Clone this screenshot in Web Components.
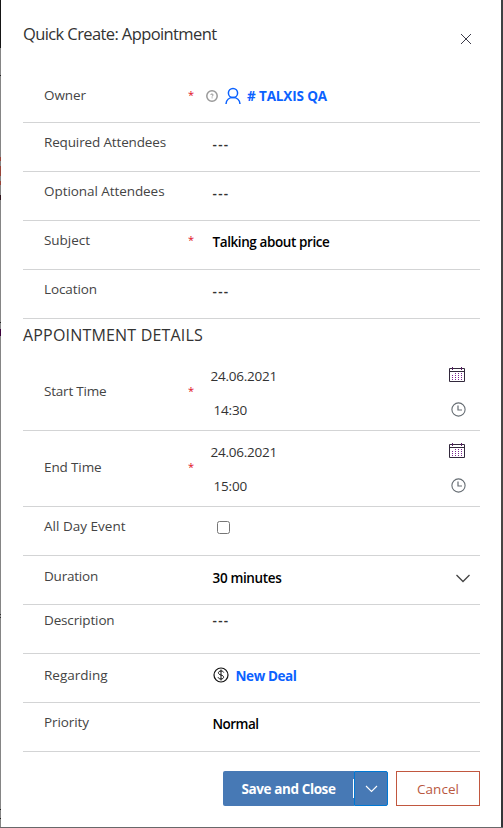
<!DOCTYPE html>
<html lang="en"><head><meta charset="utf-8"><title>Quick Create: Appointment</title>
<style>
html,body{margin:0;height:828px;overflow:hidden;background:#fff}
body{font-family:"Open Sans","Noto Sans",sans-serif}
</style></head><body>
<quick-create></quick-create>
<script>
// Text run whose tracking is adjusted so that it occupies a given width.
class FitText extends HTMLElement{
  constructor(){super();this.attachShadow({mode:'open'}).innerHTML='<style>:host{display:inline-block;white-space:pre;line-height:20px;height:20px}span{display:inline-block}</style><span><slot></slot></span>';}
  connectedCallback(){
    const w=+this.getAttribute('w'),n=this.textContent.length,s=this.shadowRoot.querySelector('span');
    this.style.width=w+'px';
    s.style.letterSpacing=((w-s.getBoundingClientRect().width)/n)+'px';
  }
}
class UiIcon extends HTMLElement{
  connectedCallback(){
    const I={
      close:[12,12,'<path d="M1 1l10 10M11 1L1 11" stroke="#3b3a48" stroke-width="1"/>'],
      help:[12,12,'<circle cx="6" cy="6" r="5.2" stroke="#999" stroke-width="1.5"/><path d="M4.8 5c0-1.5 2.3-1.4 2.3 0 0 .8-1 .8-1 1.6M6.1 7.4v.9" stroke="#888" stroke-width=".9"/>'],
      person:[16,18,'<circle cx="8" cy="6" r="4.6" stroke="#0b62ff" stroke-width="1.5"/><path d="M1 17c.2-4 3.200-6.400 7-6.400s6.800 2.400 7 6.400" stroke="#0b62ff" stroke-width="1.500"/>'],
      calendar:[16,15,'<path d="M.5 1.500h15v13H.5zM.5 4.500h15" stroke="#32283c"/><path d="M3.500 0v3M12.500 0v3" stroke="#5a2066"/><path d="M6.500 6v7M9.500 6v7M12.500 6v7M3.500 8v5" stroke="#7b2590" stroke-dasharray="1 1"/>'],
      clock:[15,15,'<circle cx="7.500" cy="7.500" r="6.600" stroke="#666d73" stroke-width="1.100"/><path d="M7 3.500v4.500h4" stroke="#666d73" stroke-width="1.200"/>'],
      dollar:[16,16,'<circle cx="8" cy="8" r="7" stroke="#111" stroke-width="1.200"/><path d="M10.700 5.500C10.200 4.300 9.300 4 8 4c-3.300 0-3.600 3.300 0 4s3.300 4 0 4c-1.500 0-2.500-.5-2.900-1.700M8 2.500v11" stroke="#111" stroke-width="1"/>'],
      down:[16,10,'<path d="M1.500 1l6.500 6.500L14.500 1" stroke="#444" stroke-width="1.300"/>'],
      drop:[13,8,'<path d="M1 1l5.500 5.500L12 1" stroke="#fff" stroke-width="1.100"/>']
    }[this.getAttribute('name')];
    this.attachShadow({mode:'open'}).innerHTML=`<style>:host{display:block;flex:none;width:${I[0]}px;height:${I[1]}px}svg{display:block}</style><svg width="${I[0]}" height="${I[1]}" fill="none">${I[2]}</svg>`;
  }
}
class FieldRow extends HTMLElement{
  connectedCallback(){
    const a=n=>this.getAttribute(n);
    this.attachShadow({mode:'open'}).innerHTML=`<style>
    :host{display:grid;grid-template-columns:165px 24.500px 1fr;box-sizing:border-box;height:${a('h')||49}px;border-bottom:1px solid #d3d4d5;font-size:13.500px;color:#444;width:457px}
    .l{padding:${a('ly')||9}px 0 0 21px}
    .r{padding-top:${a('ly')||9}px;color:#e00b1c;font-size:11px;line-height:20px}
    .v{padding-top:${a('vy')||11}px;color:#000}
    </style><div class="l"><fit-text w="${a('w')}">${a('label')}</fit-text></div><div class="r">${this.hasAttribute('required')?'*':''}</div><div class="v"><slot></slot></div>`;
  }
}
class DateTimeField extends HTMLElement{
  connectedCallback(){
    this.attachShadow({mode:'open'}).innerHTML=`<style>:host{display:block;color:#333}
    div{display:flex;justify-content:space-between;height:20px}
    .d{margin-left:-2px;padding-right:15px}.t{margin-top:14px;padding:0 14px 0 1px}
    .d ui-icon{margin-top:1px}.t ui-icon{margin-top:2px}</style>
    <div class="d"><fit-text w="66.5">${this.getAttribute('date')}</fit-text><ui-icon name="calendar"></ui-icon></div>
    <div class="t"><fit-text w="33.5">${this.getAttribute('time')}</fit-text><ui-icon name="clock"></ui-icon></div>`;
  }
}
class FormActions extends HTMLElement{
  connectedCallback(){
    this.attachShadow({mode:'open'}).innerHTML=`<style>
    :host{display:flex;justify-content:flex-end;width:457px;height:35px;margin-top:19px;font-size:13.500px}
    button{font:inherit;box-sizing:border-box;height:35px;padding:0;margin:0;border:0;display:flex;align-items:center;justify-content:center}
    .s{width:131px;background:#4779b5;color:#fff;font-weight:700;border-radius:2px 0 0 2px}
    i{width:1px;background:linear-gradient(#4779b5 8px,#fff 8px 27px,#4779b5 27px);margin-left:-1px}
    .m{width:34px;background:#4779b5;border:1px solid #0078d4;border-radius:0 2px 2px 0}
    .c{width:84px;margin-left:8px;background:#fff;border:1px solid #c1573f;color:#b9583f}
    .s{padding-top:1px}.c{padding-top:1px}</style>
    <button class="s"><fit-text w="94">Save and Close</fit-text></button><i></i>
    <button class="m"><ui-icon name="drop"></ui-icon></button>
    <button class="c"><fit-text w="42">Cancel</fit-text></button>`;
  }
}
class QuickCreate extends HTMLElement{
  connectedCallback(){
    this.attachShadow({mode:'open'}).innerHTML=`<style>
    :host{display:grid;grid-template-columns:1px 1fr 2px;grid-template-rows:827px 1px;width:503px;height:828px}
    .left{background:linear-gradient(#151515 48px,#858585 48px 75px,#222 75px 76px,#858585 76px 157px,#984438 157px 161px,#858585 161px 166px,#984438 166px 176px,#858585 176px 181px,#984438 181px 185px,#858585 185px 195px,#30151d 195px 200px,#858585 200px 322px,#222 322px 323px,#858585 323px 329px,#3c003c 329px 336px,#858585 336px 614px,#333 614px 615px,#858585 615px 617px,#333 617px 618px,#858585 618px 809px,#222 809px 810px,#858585 810px 818px,#222 818px 819px,#858585 819px)}
    .right{background:linear-gradient(#3e4144,#4b4746 60%,#333538)}
    .bottom{grid-column:1/4;background:#68686a}
    main{padding-left:22px;background:#fff}
    header{display:flex;justify-content:space-between;width:457px;height:74px}
    h1,h2{margin:0;font-weight:400;color:#333}
    h1{font-size:16.500px;padding-top:21.5px}
    header ui-icon{margin:33px 8px 0 0}
    h2{height:36px;box-sizing:border-box;padding-top:5px;font-size:16px}
    .e{color:#333;font-weight:600}
    b,a{font-weight:600}a{color:#0b62ff;font-weight:700}
    .f{display:flex}
    input{display:block;width:13px;height:13px;margin:3px 0 0 4px}
    </style>
    <div class="left"></div><main>
    <header><h1><fit-text w="193.5">Quick Create: Appointment</fit-text></h1><ui-icon name="close"></ui-icon></header>
    <field-row label="Owner" w="42" ly="11" vy="12" required><div class="f" style="margin-left:-7px"><ui-icon name="help" style="margin-top:4px"></ui-icon><ui-icon name="person" style="margin:1px 0 0 7px"></ui-icon><a style="margin-left:6.5px"><fit-text w="80">#&nbsp;TALXIS QA</fit-text></a></div></field-row>
    <field-row label="Required Attendees" w="122"><fit-text class="e" w="17">---</fit-text></field-row>
    <field-row label="Optional Attendees" w="120.5"><fit-text class="e" w="17">---</fit-text></field-row>
    <field-row label="Subject" w="46" required><b><fit-text w="117">Talking about price</fit-text></b></field-row>
    <field-row label="Location" w="53"><fit-text class="e" w="17">---</fit-text></field-row>
    <h2><fit-text w="180">APPOINTMENT DETAILS</fit-text></h2>
    <field-row label="Start Time" w="62.5" h="76" ly="26" required><date-time-field date="24.06.2021" time="14:30"></date-time-field></field-row>
    <field-row label="End Time" w="57.5" h="76" ly="26" required><date-time-field date="24.06.2021" time="15:00"></date-time-field></field-row>
    <field-row label="All Day Event" w="81.5"><input type="checkbox" aria-label="All Day Event"></field-row>
    <field-row label="Duration" w="54" ly="10" vy="12"><div class="f" style="justify-content:space-between;padding-right:9px"><b><fit-text w="69">30 minutes</fit-text></b><ui-icon name="down" style="margin-top:6px"></ui-icon></div></field-row>
    <field-row label="Description" w="70.5" ly="5" vy="5"><fit-text class="e" w="17">---</fit-text></field-row>
    <field-row label="Regarding" w="63.5" ly="11" vy="12"><div class="f"><ui-icon name="dollar" style="margin-top:1px"></ui-icon><a style="margin-left:7px"><fit-text w="61">New Deal</fit-text></a></div></field-row>
    <field-row label="Priority" w="45"><b><fit-text w="46">Normal</fit-text></b></field-row>
    <form-actions></form-actions>
    </main><div class="right"></div><div class="bottom"></div>`;
  }
}
customElements.define('fit-text',FitText);
customElements.define('ui-icon',UiIcon);
customElements.define('date-time-field',DateTimeField);
customElements.define('field-row',FieldRow);
customElements.define('form-actions',FormActions);
customElements.define('quick-create',QuickCreate);
</script></body></html>
